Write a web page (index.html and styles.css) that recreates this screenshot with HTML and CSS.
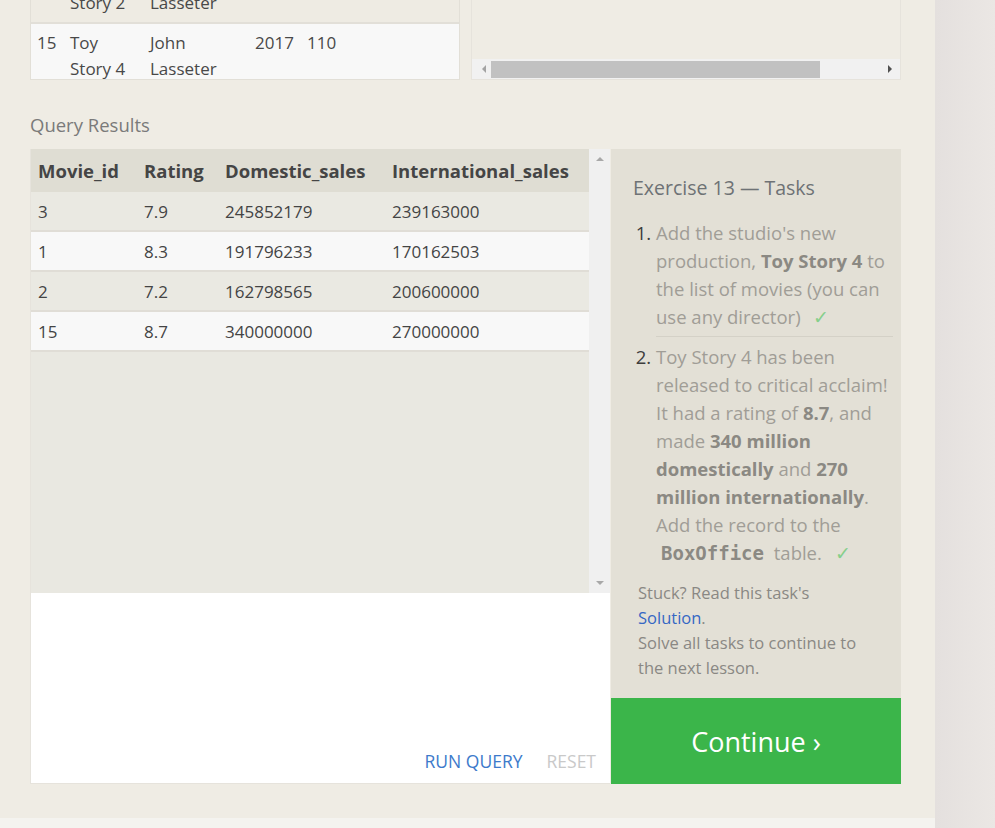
FILE: index.html
```html
<!DOCTYPE html>
<html>
<head>
<meta charset="utf-8">
<link rel="stylesheet" href="styles.css">
</head>
<body>
<div class="page">
  <div class="content">
    <div class="top-row">
      <div class="movies-box">
        <table class="movies">
          <tr class="row-prev">
            <td class="c-id">2</td><td class="c-title">Toy<br>Story 2</td><td class="c-dir">John<br>Lasseter</td><td class="c-year">1999</td><td class="c-len">93</td>
          </tr>
          <tr class="row-new">
            <td class="c-id">15</td><td class="c-title">Toy<br>Story 4</td><td class="c-dir">John<br>Lasseter</td><td class="c-year">2017</td><td class="c-len">110</td>
          </tr>
        </table>
      </div>
      <div class="side-box">
        <div class="hscroll">
          <span class="arrow-left"></span>
          <span class="hthumb"></span>
          <span class="arrow-right"></span>
        </div>
      </div>
    </div>

    <div class="results-label">Query Results</div>

    <div class="results">
      <div class="results-left">
        <div class="table-area">
          <div class="table-wrap">
            <table class="res">
              <thead>
                <tr><th class="w1">Movie_id</th><th class="w2">Rating</th><th class="w3">Domestic_sales</th><th>International_sales</th></tr>
              </thead>
              <tbody>
                <tr class="odd"><td>3</td><td>7.9</td><td>245852179</td><td>239163000</td></tr>
                <tr class="even"><td>1</td><td>8.3</td><td>191796233</td><td>170162503</td></tr>
                <tr class="odd"><td>2</td><td>7.2</td><td>162798565</td><td>200600000</td></tr>
                <tr class="even"><td>15</td><td>8.7</td><td>340000000</td><td>270000000</td></tr>
              </tbody>
            </table>
          </div>
          <div class="vscroll">
            <span class="arrow-up"></span>
            <span class="arrow-down"></span>
          </div>
        </div>
        <div class="editor">
          <div class="actions">
            <span class="run">RUN QUERY</span>
            <span class="reset">RESET</span>
          </div>
        </div>
      </div>
      <div class="results-right">
        <div class="tasks">
          <div class="tasks-title">Exercise 13 — Tasks</div>
          <ol class="task-list">
            <li class="done first">Add the studio's new production, <b>Toy Story 4</b> to the list of movies (you can use any director) <span class="check">✓</span></li>
            <li class="done">Toy Story 4 has been released to critical acclaim! It had a rating of <b>8.7</b>, and made <b>340 million domestically</b> and <b>270 million internationally</b>. Add the record to the <code>BoxOffice</code> table. <span class="check">✓</span></li>
          </ol>
          <div class="stuck">Stuck? Read this task's <span class="solution">Solution</span>.<br>Solve all tasks to continue to the next lesson.</div>
        </div>
        <div class="continue">Continue ›</div>
      </div>
    </div>
  </div>
</div>
<div class="footer-strip"></div>
</body>
</html>
```

FILE: styles.css
```css
html, body {
  margin: 0;
  padding: 0;
}
body {
  background: linear-gradient(to right, #e4e0de 0, #ebe7e4 60px) no-repeat;
  background-color: #ebe7e4;
  background-position: 935px 0;
  background-size: 60px 100%;
  font-family: "Open Sans", "Liberation Sans", sans-serif;
  height: 828px;
  overflow: hidden;
}
.page {
  width: 935px;
  height: 818px;
  background: #efece4;
  overflow: hidden;
}
.footer-strip {
  width: 935px;
  height: 10px;
  background: #f4f3ef;
}
.content {
  padding-left: 30px;
  width: 871px;
}

/* top row */
.top-row {
  display: flex;
  gap: 11px;
  height: 80px;
}
.movies-box {
  width: 428px;
  height: 79px;
  border: 1px solid #e2dfd7;
  border-top: none;
  overflow: hidden;
  background: #eeebe3;
}
.movies {
  border-collapse: collapse;
  margin-top: -42px;
  width: 100%;
  font-size: 17px;
  color: #484848;
  line-height: 26px;
}
.movies td {
  vertical-align: top;
  padding: 6px 0 6px 0;
}
.movies .row-prev td {
  border-bottom: 2px solid #e2dfd8;
}
.movies .row-new {
  background: #f8f8f8;
}
.c-id { width: 33px; padding-left: 6px !important; }
.c-title { width: 80px; }
.c-dir { width: 105px; }
.c-year { width: 52px; }
.side-box {
  width: 428px;
  height: 79px;
  border: 1px solid #e6e3dc;
  border-top: none;
  display: flex;
  flex-direction: column;
  justify-content: flex-end;
}
.hscroll {
  height: 20px;
  background: #f1f1f1;
  display: flex;
  align-items: center;
}
.hthumb {
  display: block;
  width: 329px;
  height: 17px;
  background: #c1c1c1;
  margin-left: 5px;
}
.arrow-left {
  display: block;
  width: 0;
  height: 0;
  margin-left: 10px;
  border-top: 4px solid transparent;
  border-bottom: 4px solid transparent;
  border-right: 4px solid #a3a3a3;
}
.arrow-right {
  display: block;
  width: 0;
  height: 0;
  margin-left: auto;
  margin-right: 8px;
  border-top: 4px solid transparent;
  border-bottom: 4px solid transparent;
  border-left: 4px solid #505050;
}

.results-label {
  font-size: 18.5px;
  color: #7a7a7a;
  margin-top: 32px;
  height: 26px;
  line-height: 26px;
  margin-bottom: 11px;
}

/* results panel */
.results {
  display: flex;
  height: 635px;
}
.results-left {
  width: 579px;
  border-left: 1px solid #e6e3dc;
  display: flex;
  flex-direction: column;
}
.table-area {
  height: 444px;
  display: flex;
  background: #e9e8e1;
}
.table-wrap {
  width: 558px;
}
.res {
  border-collapse: collapse;
  width: 100%;
  color: #444;
}
.res th {
  text-align: left;
  font-weight: 700;
  font-size: 18.5px;
  height: 43px;
  padding: 0 0 0 7px;
  background: #dfddd3;
  color: #454545;
}
.res th.w1 { width: 99px; }
.res th.w2 { width: 74px; }
.res th.w3 { width: 160px; }
.res td {
  height: 38px;
  padding: 0 0 0 7px;
  font-size: 17px;
  border-bottom: 2px solid #e0ddd6;
}
.res tr.odd td { background: #eae9e2; }
.res tr.even td { background: #f8f8f8; }
.vscroll {
  width: 21px;
  background: #f0f0f0;
  display: flex;
  flex-direction: column;
  align-items: center;
  justify-content: space-between;
  padding: 8px 0 8px;
}
.arrow-up {
  width: 0; height: 0;
  border-left: 4px solid transparent;
  border-right: 4px solid transparent;
  border-bottom: 4px solid #a8a8a8;
}
.arrow-down {
  width: 0; height: 0;
  border-left: 4px solid transparent;
  border-right: 4px solid transparent;
  border-top: 4px solid #a8a8a8;
}
.editor {
  flex: 1;
  background: #fff;
  border-bottom: 1px solid #e6e3dc;
  display: flex;
  align-items: flex-end;
  justify-content: flex-end;
}
.actions {
  display: flex;
  gap: 24px;
  padding: 0 14px 10px 0;
  font-size: 17.5px;
  line-height: 24px;
}
.run { color: #3d7acb; }
.reset { color: #c9c9c9; }

/* tasks */
.results-right {
  width: 290px;
  margin-left: 1px;
  display: flex;
  flex-direction: column;
}
.tasks {
  flex: 1;
  background: #e3e0d6;
  padding: 26px 8px 0 22px;
}
.tasks-title {
  font-size: 19.5px;
  color: #6e7275;
  line-height: 26px;
}
.task-list {
  margin: 18px 0 0 0;
  padding-left: 23px;
  font-size: 18.5px;
  line-height: 28px;
  color: #a09d96;
}
.task-list li {
  padding: 0 0 5px 0;
}
.task-list li::marker {
  color: #3d3d3d;
}
.task-list li.first {
  border-bottom: 1px solid #d4d1c7;
}
.task-list li + li {
  padding-top: 6px;
}
.task-list b {
  color: #8b8983;
}
.task-list code {
  font-family: "DejaVu Sans Mono", "Liberation Mono", monospace;
  font-weight: 700;
  font-size: 19px;
  color: #8b8983;
  padding: 0 5px;
}
.check {
  color: #86cf8b;
  margin-left: 8px;
}
.stuck {
  margin-top: 8px;
  padding-left: 5px;
  width: 232px;
  font-size: 16.5px;
  line-height: 25px;
  color: #8a8884;
}
.solution { color: #3567c4; }
.continue {
  height: 86px;
  background: #3bb54a;
  color: #fff;
  font-size: 27px;
  display: flex;
  align-items: center;
  justify-content: center;
}
```
